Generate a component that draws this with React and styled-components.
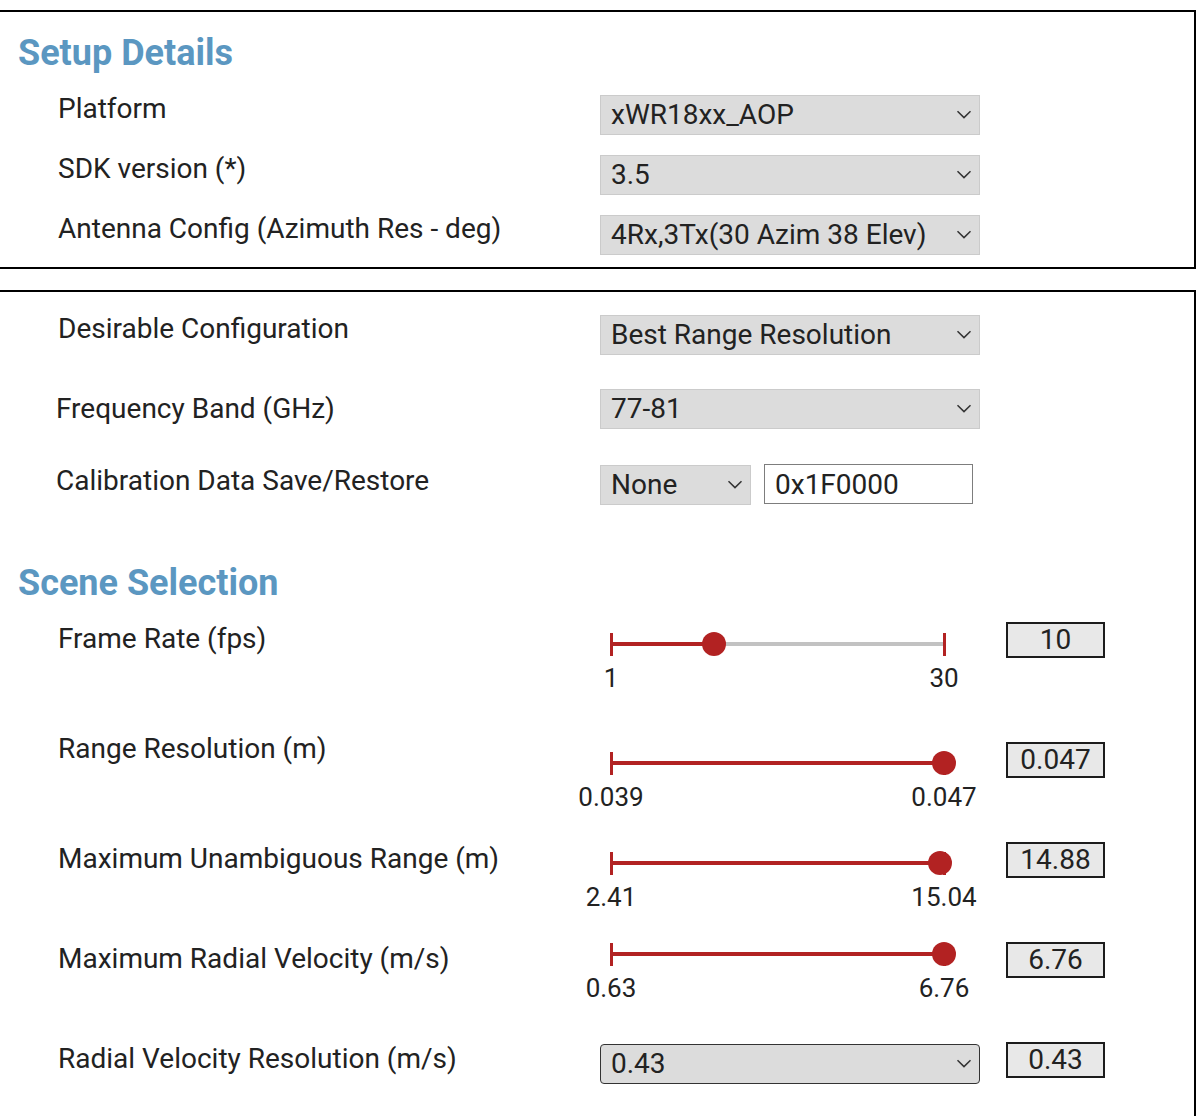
import React from "react";
import styled, { createGlobalStyle } from "styled-components";

const Global = createGlobalStyle`
  html, body { margin: 0; padding: 0; background: #fff; }
  body {
    font-family: Roboto, "Noto Sans", Arial, sans-serif;
    color: #222;
    overflow: hidden;
  }
`;

const Page = styled.div`
  width: 1204px;
  height: 1116px;
  overflow: hidden;
  box-sizing: border-box;
  padding-top: 10px;
  display: flex;
  flex-direction: column;
  gap: 21px;
`;

const Panel = styled.section`
  flex-shrink: 0;
  width: 1196px;
  box-sizing: border-box;
  border: 2px solid #000;
  border-left: none;
  ${(p) => (p.$open ? "border-bottom: none;" : "")}
  padding: ${(p) => p.$pt}px 0 ${(p) => p.$pb}px 0;
`;

const Heading = styled.h2`
  margin: ${(p) => p.$mt || 0}px 0 ${(p) => p.$mb || 22}px 18px;
  font-size: 36px;
  line-height: 40px;
  font-weight: 700;
  color: #5b97c1;
`;

const Row = styled.div`
  display: grid;
  grid-template-columns: 600px ${(p) => p.$cols || "380px"};
  align-items: start;
  height: ${(p) => p.$h}px;
`;

const Label = styled.div`
  padding-left: ${(p) => (p.$indent != null ? p.$indent : 58)}px;
  margin-top: ${(p) => p.$top || 0}px;
  font-size: 28px;
  line-height: 28px;
  white-space: nowrap;
  color: #222;
`;

const SelectBox = styled.div`
  box-sizing: border-box;
  width: ${(p) => p.$w || 380}px;
  height: 40px;
  margin-top: ${(p) => p.$top || 0}px;
  display: flex;
  align-items: center;
  justify-content: space-between;
  padding: 0 7px 0 10px;
  background: #dcdcdc;
  border: ${(p) => (p.$dark ? "1.5px solid #333" : "1px solid #cbcbcb")};
  border-radius: ${(p) => (p.$dark ? 4 : 0)}px;
  font-size: 28px;
  line-height: 1;
  color: #222;
  white-space: nowrap;
`;

const SelectText = styled.span`
  padding-bottom: 1px;
`;

const Chevron = styled.svg`
  flex-shrink: 0;
  width: 16px;
  height: 9px;
  margin-bottom: 2px;
`;

const ControlGroup = styled.div`
  display: flex;
  align-items: flex-start;
  gap: 13px;
`;

const HexInput = styled.input`
  box-sizing: border-box;
  width: 209px;
  height: 40px;
  border: 1px solid #7d7d7d;
  background: #fff;
  padding: 0 0 0 10px;
  margin: 0;
  font-family: Roboto, "Noto Sans", Arial, sans-serif;
  font-size: 28px;
  color: #222;
  outline: none;
`;

const SliderCell = styled.div`
  margin-top: ${(p) => p.$top || 0}px;
  width: 380px;
`;

const Track = styled.div`
  position: relative;
  margin-left: 11px;
  width: 333px;
  height: 24px;
`;

const Rail = styled.div`
  position: absolute;
  left: 0;
  right: 0;
  top: 10px;
  height: 4px;
  background: #c2c2c2;
`;

const Fill = styled.div`
  position: absolute;
  left: 0;
  top: 10px;
  height: 4px;
  background: #b22222;
`;

const Tick = styled.div`
  position: absolute;
  top: 0.5px;
  width: 3px;
  height: 23px;
  background: #b22222;
  ${(p) => (p.$end ? "right: -1.5px;" : "left: -1.5px;")}
`;

const Thumb = styled.div`
  position: absolute;
  top: 0;
  width: 24px;
  height: 24px;
  margin-left: -12px;
  border-radius: 50%;
  background: #b22222;
`;

const Scale = styled.div`
  margin: 6px 0 0 11px;
  width: 333px;
  display: flex;
  justify-content: space-between;
`;

const ScaleMark = styled.span`
  width: 0;
  display: flex;
  justify-content: center;
  white-space: nowrap;
  font-size: 26px;
  line-height: 32px;
  color: #222;
`;

const ValueBox = styled.div`
  box-sizing: border-box;
  width: 99px;
  height: 36px;
  margin-top: ${(p) => p.$top || 0}px;
  border: 2px solid #1c1c1c;
  background: #e8e8e8;
  display: flex;
  align-items: center;
  justify-content: center;
  font-size: 28px;
  line-height: 28px;
  color: #222;
`;

function Select({ value, w, top, dark }) {
  return (
    <SelectBox $w={w} $top={top} $dark={dark}>
      <SelectText>{value}</SelectText>
      <Chevron viewBox="0 0 16 9">
        <path d="M1.5 1.2 L8 7.6 L14.5 1.2" fill="none" stroke="#333" strokeWidth="1.5" />
      </Chevron>
    </SelectBox>
  );
}

function Slider({ min, max, value, minLabel, maxLabel, top }) {
  const pct = ((value - min) / (max - min)) * 333;
  return (
    <SliderCell $top={top}>
      <Track>
        <Rail />
        <Fill style={{ width: pct }} />
        <Tick />
        <Tick $end />
        <Thumb style={{ left: pct }} />
      </Track>
      <Scale>
        <ScaleMark>{minLabel}</ScaleMark>
        <ScaleMark>{maxLabel}</ScaleMark>
      </Scale>
    </SliderCell>
  );
}

const setupRows = [
  { label: "Platform", value: "xWR18xx_AOP", h: 60 },
  { label: "SDK version (*)", value: "3.5", h: 60 },
  { label: "Antenna Config (Azimuth Res - deg)", value: "4Rx,3Tx(30 Azim 38 Elev)", h: 40 },
];

const sliders = [
  { label: "Frame Rate (fps)", min: 1, max: 30, value: 10, minLabel: "1", maxLabel: "30", box: "10", h: 110, st: 10, bt: 0 },
  { label: "Range Resolution (m)", min: 0.039, max: 0.047, value: 0.047, minLabel: "0.039", maxLabel: "0.047", box: "0.047", h: 110, st: 19, bt: 10 },
  { label: "Maximum Unambiguous Range (m)", min: 2.41, max: 15.04, value: 14.88, minLabel: "2.41", maxLabel: "15.04", box: "14.88", h: 100, st: 9, bt: 0 },
  { label: "Maximum Radial Velocity (m/s)", min: 0.63, max: 6.76, value: 6.76, minLabel: "0.63", maxLabel: "6.76", box: "6.76", h: 100, st: 0, bt: 0 },
];

export default function App() {
  return (
    <>
      <Global />
      <Page>
        <Panel $pt={21} $pb={12}>
          <Heading>Setup Details</Heading>
          {setupRows.map((r) => (
            <Row key={r.label} $h={r.h}>
              <Label>{r.label}</Label>
              <Select value={r.value} />
            </Row>
          ))}
        </Panel>

        <Panel $pt={23} $pb={40} $open>
          <Row $h={74}>
            <Label>Desirable Configuration</Label>
            <Select value="Best Range Resolution" />
          </Row>
          <Row $h={75}>
            <Label $indent={56} $top={6}>Frequency Band (GHz)</Label>
            <Select value="77-81" />
          </Row>
          <Row $h={96} $cols="auto">
            <Label $indent={56} $top={3}>Calibration Data Save/Restore</Label>
            <ControlGroup>
              <Select value="None" w={151} top={1} />
              <HexInput defaultValue="0x1F0000" readOnly />
            </ControlGroup>
          </Row>

          <Heading $mt={3} $mb={19}>Scene Selection</Heading>
          {sliders.map((s) => (
            <Row key={s.label} $h={s.h} $cols="406px 99px">
              <Label $top={3}>{s.label}</Label>
              <Slider
                min={s.min}
                max={s.max}
                value={s.value}
                minLabel={s.minLabel}
                maxLabel={s.maxLabel}
                top={s.st}
              />
              <ValueBox $top={s.bt}>{s.box}</ValueBox>
            </Row>
          ))}
          <Row $h={60} $cols="406px 99px">
            <Label $top={3}>Radial Velocity Resolution (m/s)</Label>
            <Select value="0.43" top={2} dark />
            <ValueBox>0.43</ValueBox>
          </Row>
        </Panel>
      </Page>
    </>
  );
}
